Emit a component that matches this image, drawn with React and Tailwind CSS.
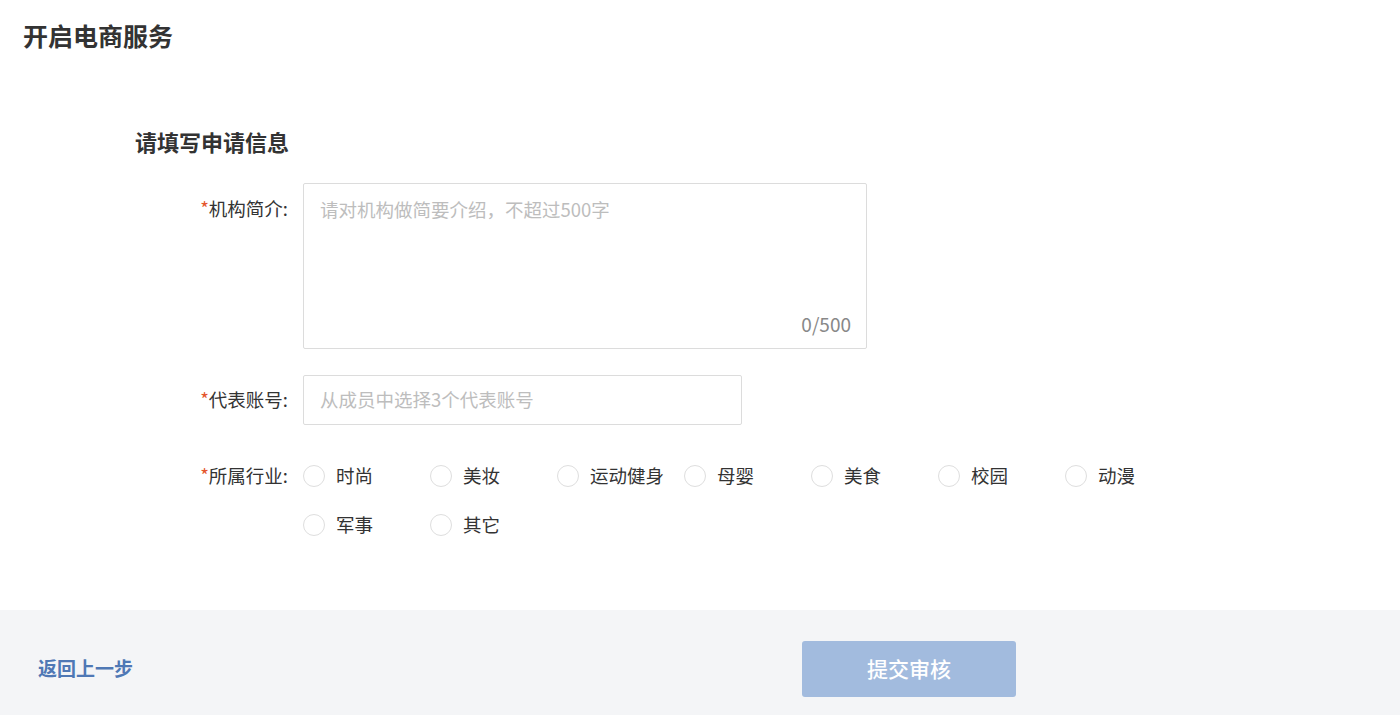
const INDUSTRIES = ["时尚", "美妆", "运动健身", "母婴", "美食", "校园", "动漫", "军事", "其它"];

function Label({ children }) {
  return (
    <div className="w-[168px] shrink-0 pr-[15px] text-right text-[18.5px] text-[#333]">
      <span className="text-[#e4542b]">*</span>
      {children}:
    </div>
  );
}

export default function App() {
  return (
    <div
      className="flex min-h-screen flex-col bg-white"
      style={{ fontFamily: '"Noto Sans CJK SC", "Liberation Sans", sans-serif' }}
    >
      <div className="flex-1">
        <h1 className="pl-[23px] pt-[19px] text-[25px] font-bold leading-[32px] text-[#333]">开启电商服务</h1>

        <div className="pl-[135px]">
          <h2 className="mt-[76px] text-[22px] font-bold leading-[28px] text-[#333]">请填写申请信息</h2>

          {/* 机构简介 */}
          <div className="mt-[28px] flex">
            <div className="pt-[11px] leading-[28px]">
              <Label>机构简介</Label>
            </div>
            <div className="relative h-[166px] w-[564px] rounded-[2px] border border-[#dcdcdc]">
              <div className="px-[16px] pt-[11px] text-[18.5px] leading-[28px] text-[#bdbdbd]">
                请对机构做简要介绍，不超过500字
              </div>
              <div className="absolute bottom-[11px] right-[15px] text-[19px] leading-[26px] text-[#888]">0/500</div>
            </div>
          </div>

          {/* 代表账号 */}
          <div className="mt-[26px] flex items-center">
            <Label>代表账号</Label>
            <div className="flex h-[50px] w-[439px] items-center rounded-[2px] border border-[#dcdcdc] px-[16px] text-[18.5px] text-[#bdbdbd]">
              从成员中选择3个代表账号
            </div>
          </div>

          {/* 所属行业 */}
          <div className="mt-[36px] flex">
            <div className="flex h-[30px] items-center">
              <Label>所属行业</Label>
            </div>
            <div className="grid w-[889px] grid-cols-7 gap-y-[19px]">
              {INDUSTRIES.map((name) => (
                <label key={name} className="flex h-[30px] w-[127px] items-center">
                  <span className="h-[22px] w-[22px] shrink-0 rounded-full border border-[#dedede] bg-white" />
                  <span className="ml-[11px] text-[18.5px] text-[#333]">{name}</span>
                </label>
              ))}
            </div>
          </div>
        </div>
      </div>

      <div className="flex h-[105px] items-center bg-[#f4f5f7] pt-[12px]">
        <a className="pl-[38px] text-[19px] font-semibold text-[#4f78b5]">返回上一步</a>
        <button className="ml-auto mr-[384px] h-[56px] w-[214px] rounded-[3px] bg-[#a2bbde] text-[21px] font-medium text-white">
          提交审核
        </button>
      </div>
    </div>
  );
}
